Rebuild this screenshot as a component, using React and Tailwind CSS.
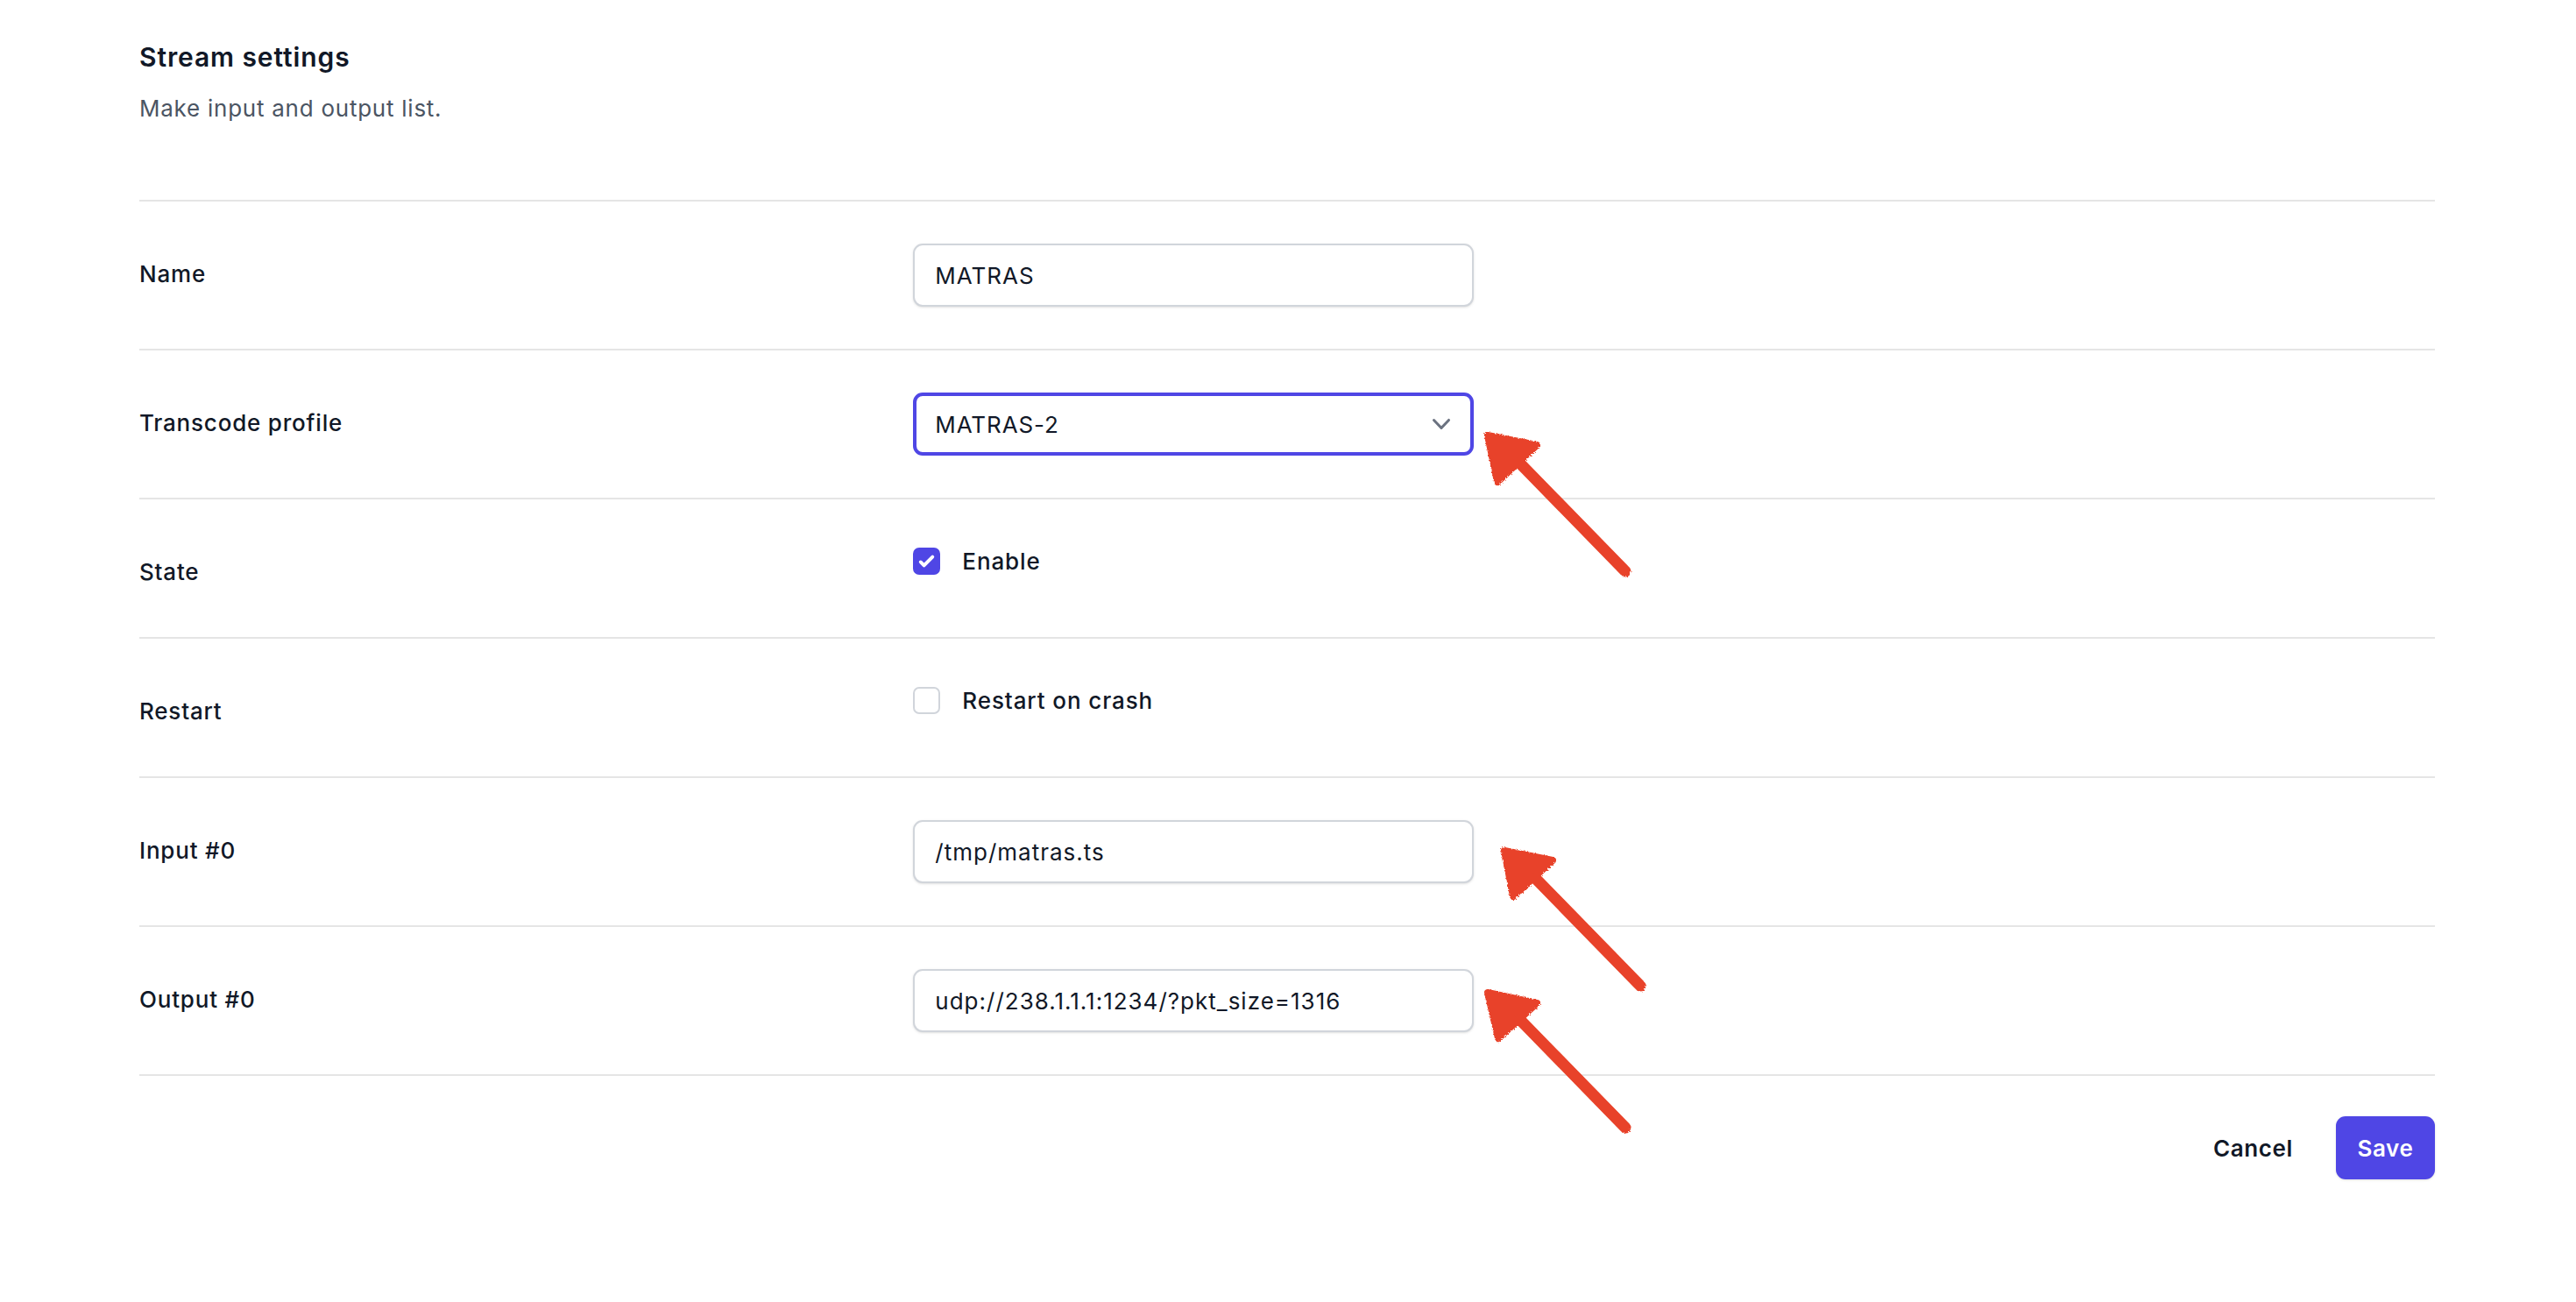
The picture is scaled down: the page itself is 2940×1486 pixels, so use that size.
import React from 'react';

const rows = [
    { label: 'Name', type: 'input', value: 'MATRAS' },
    { label: 'Transcode profile', type: 'select', value: 'MATRAS-2' },
    { label: 'State', type: 'checkbox', value: 'Enable', checked: true },
    { label: 'Restart', type: 'checkbox', value: 'Restart on crash', checked: false },
    { label: 'Input #0', type: 'input', value: '/tmp/matras.ts' },
    { label: 'Output #0', type: 'input', value: 'udp://238.1.1.1:1234/?pkt_size=1316' },
];

// hand-drawn annotation arrows: head triangle + shaft
const arrows = [
    { head: '1698,497 1754,508 1709,550', shaft: 'M1734 528 L1855 652' },
    { head: '1717,971 1772,982 1727,1023', shaft: 'M1752 1002 L1872 1125' },
    { head: '1698,1133 1754,1145 1710,1185', shaft: 'M1734 1163 L1855 1287' },
];

function Checkbox({ checked }) {
    if (checked) {
        return (
            <span className="w-[31px] h-[31px] rounded-[7px] bg-[#4f46e5] flex items-center justify-center shrink-0">
                <svg width="31" height="31" viewBox="0 0 16 16" fill="white">
                    <path d="M12.207 4.793a1 1 0 010 1.414l-5 5a1 1 0 01-1.414 0l-2-2a1 1 0 011.414-1.414L6.5 9.086l4.293-4.293a1 1 0 011.414 0z" />
                </svg>
            </span>
        );
    }
    return <span className="w-[31px] h-[31px] rounded-[7px] border-2 border-[#d1d5db] bg-white shrink-0"></span>;
}

function Field({ row }) {
    if (row.type === 'select') {
        return (
            <div className="w-[640px] h-[72px] rounded-[11px] border-[4px] border-[#4f46e5] bg-white flex items-center justify-between pl-[21px] pr-[13px]">
                <span className="text-[26px] tracking-[0.9px] text-[#111827]">{row.value}</span>
                <svg width="40" height="40" viewBox="0 0 20 20" fill="#6b7280">
                    <path fillRule="evenodd" d="M5.23 7.21a.75.75 0 011.06.02L10 11.168l3.71-3.938a.75.75 0 111.08 1.04l-4.25 4.5a.75.75 0 01-1.08 0l-4.25-4.5a.75.75 0 01.02-1.06z" clipRule="evenodd" />
                </svg>
            </div>
        );
    }
    if (row.type === 'checkbox') {
        return (
            <label className="flex items-center gap-[25px] h-[45px]">
                <Checkbox checked={row.checked} />
                <span className="text-[26px] font-medium tracking-[0.9px] text-[#111827] leading-[45px]">{row.value}</span>
            </label>
        );
    }
    return (
        <input
            type="text"
            defaultValue={row.value}
            className="block w-[640px] h-[72px] rounded-[11px] border-2 border-[#d1d5db] bg-white px-[23px] text-[26px] tracking-[1px] text-[#111827] shadow-sm outline-none"
        />
    );
}

export default function App() {
    return (
        <div className="relative min-h-screen bg-white font-['Inter','Noto_Sans',sans-serif]">
            <div className="pl-[159px] pr-[161px] pt-[39px]">
                <h2 className="text-[30px] font-semibold leading-[52px] tracking-[0.9px] text-[#111827]">Stream settings</h2>
                <p className="mt-[10px] text-[26px] leading-[45px] tracking-[0.75px] text-[#4b5563]">Make input and output list.</p>

                <div className="mt-[82px] border-b-2 border-[#e5e5e5]">
                    {rows.map((row) => (
                        <div key={row.label} className="grid grid-cols-3 gap-x-[30px] items-start border-t-2 border-[#e5e5e5] py-[48px]">
                            <div className="pt-[12px] pb-[4px] text-[26px] font-medium leading-[45px] tracking-[0.8px] text-[#111827]">{row.label}</div>
                            <div className="col-span-2">
                                <Field row={row} />
                            </div>
                        </div>
                    ))}
                </div>

                <div className="flex justify-end items-center gap-[49px] pt-[46px]">
                    <button className="text-[26px] font-semibold leading-[45px] tracking-[0.6px] text-[#111827]">Cancel</button>
                    <button className="w-[113px] h-[72px] rounded-[11px] bg-[#4f46e5] text-white text-[26px] font-semibold tracking-[0.6px] shadow-sm">Save</button>
                </div>
            </div>

            {/* red marker arrows drawn over the form */}
            <svg className="absolute left-0 top-0 pointer-events-none" width="2940" height="1486">
                <defs>
                    <filter id="rough">
                        <feTurbulence type="fractalNoise" baseFrequency="0.6" numOctaves="2" result="n" />
                        <feDisplacementMap in="SourceGraphic" in2="n" scale="4" />
                    </filter>
                </defs>
                <g filter="url(#rough)" fill="#e8432a" stroke="#e8432a" strokeLinejoin="round" strokeLinecap="round">
                    {arrows.map((a, i) => (
                        <g key={i}>
                            <polygon points={a.head} strokeWidth="8" />
                            <path d={a.shaft} strokeWidth="13" fill="none" />
                        </g>
                    ))}
                </g>
            </svg>
        </div>
    );
}
